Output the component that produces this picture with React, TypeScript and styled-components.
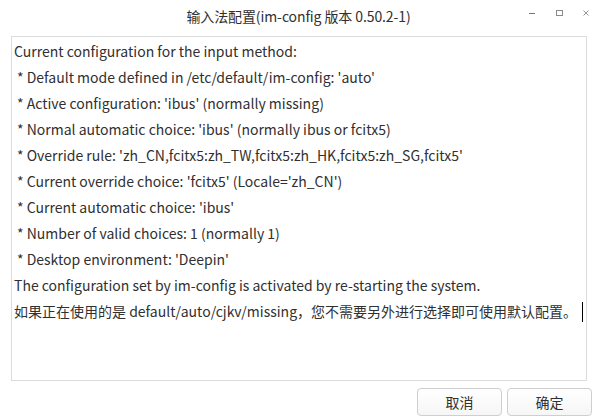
import React from "react";
import styled, { createGlobalStyle } from "styled-components";

const GlobalStyle = createGlobalStyle`
  html, body {
    margin: 0;
    padding: 0;
    background: #ffffff;
  }
  body {
    font-family: "Noto Sans CJK SC", "Noto Sans", sans-serif;
    color: #303030;
  }
`;

const Window = styled.div`
  width: 597px;
  height: 420px;
  display: flex;
  flex-direction: column;
  background: #ffffff;
  overflow: hidden;
`;

const TitleBar = styled.div`
  position: relative;
  height: 32px;
  display: flex;
  align-items: center;
  justify-content: center;
`;

const Title = styled.div`
  font-size: 14px;
  color: #303030;
  letter-spacing: -0.1px;
`;

const Controls = styled.div`
  position: absolute;
  right: -2px;
  top: 0;
  height: 26px;
  display: flex;
  align-items: center;
`;

const ControlButton = styled.div`
  width: 27px;
  height: 26px;
  display: flex;
  align-items: center;
  justify-content: center;
`;

const Body = styled.div`
  flex: 1;
  display: flex;
  flex-direction: column;
  padding: 4px 5px 4px 11px;
`;

const TextBox = styled.div`
  height: 345px;
  width: 576px;
  box-sizing: border-box;
  border: 1px solid #dcdcdc;
  padding: 1px 2px;
  font-size: 14px;
  line-height: 26px;
  color: #303030;
  white-space: pre;
  overflow: hidden;
`;

const Line = styled.div<{ $indent?: boolean }>`
  padding-left: ${(p) => (p.$indent ? "3px" : "0")};
`;

const Caret = styled.span`
  display: inline-block;
  width: 1px;
  height: 20px;
  background: #000;
  vertical-align: -5px;
  margin-left: 5px;
`;

const ButtonRow = styled.div`
  display: flex;
  justify-content: flex-end;
  gap: 5px;
  margin-top: 7px;
`;

const Button = styled.button`
  width: 85px;
  height: 28px;
  border: 1px solid #cfcfcf;
  border-radius: 4px;
  background: linear-gradient(#ffffff, #f6f6f6);
  font-family: "Noto Sans CJK SC", "Noto Sans", sans-serif;
  font-size: 14px;
  color: #303030;
  padding: 0;
`;

const lines: { text: string; indent?: boolean }[] = [
  { text: "Current configuration for the input method:" },
  { text: "* Default mode defined in /etc/default/im-config: 'auto'", indent: true },
  { text: "* Active configuration: 'ibus' (normally missing)", indent: true },
  { text: "* Normal automatic choice: 'ibus' (normally ibus or fcitx5)", indent: true },
  { text: "* Override rule: 'zh_CN,fcitx5:zh_TW,fcitx5:zh_HK,fcitx5:zh_SG,fcitx5'", indent: true },
  { text: "* Current override choice: 'fcitx5' (Locale='zh_CN')", indent: true },
  { text: "* Current automatic choice: 'ibus'", indent: true },
  { text: "* Number of valid choices: 1 (normally 1)", indent: true },
  { text: "* Desktop environment: 'Deepin'", indent: true },
  { text: "The configuration set by im-config is activated by re-starting the system." },
];

export default function App() {
  return (
    <Window>
      <GlobalStyle />
      <TitleBar>
        <Title>输入法配置(im-config 版本 0.50.2-1)</Title>
        <Controls>
          <ControlButton>
            <svg width="8" height="8" viewBox="0 0 8 8">
              <line x1="1" y1="4.5" x2="7" y2="4.5" stroke="#7a7a7a" strokeWidth="1" />
            </svg>
          </ControlButton>
          <ControlButton>
            <svg width="8" height="8" viewBox="0 0 8 8">
              <rect x="1.5" y="1.5" width="6" height="5" fill="none" stroke="#8a8a8a" strokeWidth="1" />
            </svg>
          </ControlButton>
          <ControlButton>
            <svg width="8" height="8" viewBox="0 0 8 8">
              <path d="M1.5 1.5 L6.5 6.5 M6.5 1.5 L1.5 6.5" stroke="#9a9a9a" strokeWidth="1" />
            </svg>
          </ControlButton>
        </Controls>
      </TitleBar>
      <Body>
        <TextBox>
          {lines.map((l, i) => (
            <Line key={i} $indent={l.indent}>
              {l.text}
            </Line>
          ))}
          <Line>
            如果正在使用的是 default/auto/cjkv/missing，您不需要另外进行选择即可使用默认配置。
            <Caret />
          </Line>
        </TextBox>
        <ButtonRow>
          <Button>取消</Button>
          <Button>确定</Button>
        </ButtonRow>
      </Body>
    </Window>
  );
}
